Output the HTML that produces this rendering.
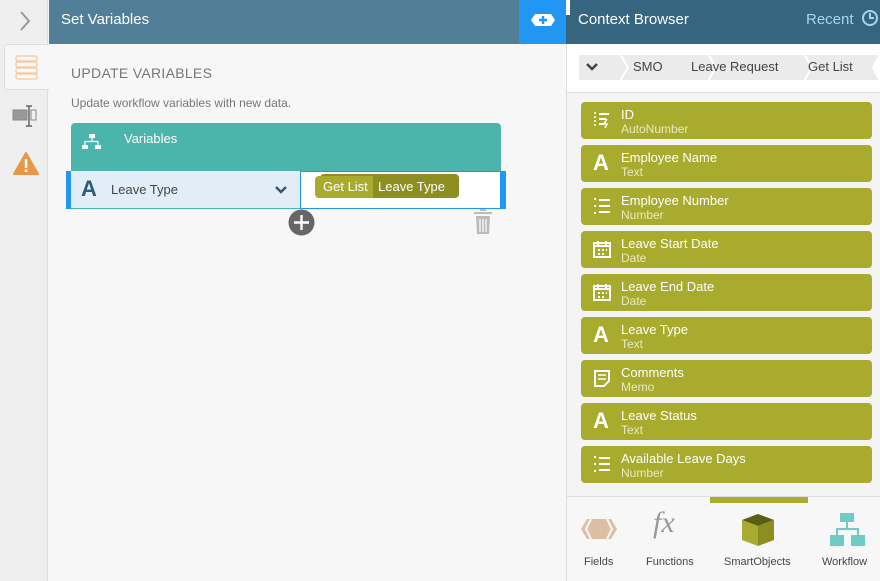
<!DOCTYPE html>
<html><head><meta charset="utf-8"><style>
*{margin:0;padding:0;box-sizing:border-box}
body{width:880px;height:581px;overflow:hidden;font-family:"Liberation Sans",sans-serif;background:#f7f7f7;position:relative}
.abs{position:absolute}
.item{position:absolute;left:581px;width:291px;height:37px;background:#a8ab2e;border-radius:4px;color:#fff}
.item .t{position:absolute;left:40px;top:5px;font-size:13px}
.item .s{position:absolute;left:40px;top:20px;font-size:12px;color:#e8ebbf}
.item .i{position:absolute;left:11px;top:8px;width:20px;height:20px}
.tab{position:absolute;top:556px;font-size:11px;color:#444}
</style></head><body>
<!-- left rail -->
<div class="abs" style="left:0;top:0;width:48px;height:581px;background:#efefef;border-right:1px solid #ddd"></div>
<svg class="abs" style="left:18px;top:10px" width="14" height="22"><path d="M3 2 L11 11 L3 20" stroke="#999" stroke-width="2" fill="none"/></svg>
<div class="abs" style="left:4px;top:44px;width:45px;height:46px;background:#f7f7f7;border:1px solid #ddd;border-right:none;border-radius:3px 0 0 3px"></div>
<svg class="abs" style="left:15px;top:54px" width="24" height="28"><g fill="none" stroke="#f3c9a0" stroke-width="1.3"><rect x="1" y="2" width="21" height="5" rx="1.5"/><rect x="1" y="8" width="21" height="5" rx="1.5"/><rect x="1" y="14" width="21" height="5" rx="1.5"/><rect x="1" y="20" width="21" height="5" rx="1.5"/></g></svg>
<svg class="abs" style="left:12px;top:104px" width="26" height="24"><rect x="1" y="6" width="14" height="10" fill="#999" stroke="#888"/><rect x="19" y="6" width="5" height="10" fill="none" stroke="#888"/><path d="M14 2h6M17 2v20M14 22h6" stroke="#666" stroke-width="1.5"/></svg>
<svg class="abs" style="left:13px;top:151px" width="26" height="25"><path d="M13 2 L25 23 L1 23 Z" fill="#e8964a" stroke="#e8964a" stroke-linejoin="round" stroke-width="2"/><rect x="11.8" y="8" width="2.5" height="9" fill="#fff"/><rect x="11.8" y="18.5" width="2.5" height="2.5" fill="#fff"/></svg>
<!-- main header -->
<div class="abs" style="left:49px;top:0;width:470px;height:44px;background:#527f98;color:#fff;font-size:15px;padding:11px 0 0 12px">Set Variables</div>
<div class="abs" style="left:519px;top:0;width:47px;height:44px;background:#2196f3"></div>
<svg class="abs" style="left:529px;top:11px" width="28" height="18"><path d="M6 3h16l4 6-4 6H6L2 9z" fill="#fff"/><path d="M14 5v8M10 9h8" stroke="#2196f3" stroke-width="2.4"/></svg>
<div class="abs" style="left:71px;top:65px;font-size:14px;color:#777;letter-spacing:.3px">UPDATE VARIABLES</div>
<div class="abs" style="left:71px;top:96px;font-size:12px;color:#777">Update workflow variables with new data.</div>
<div class="abs" style="left:71px;top:123px;width:430px;height:48px;background:#4cb5ab;border-radius:4px 4px 0 0"></div>
<svg class="abs" style="left:82px;top:133px" width="20" height="17"><g fill="#fff"><rect x="7" y="1" width="6" height="4"/><rect x="0" y="12" width="6" height="4"/><rect x="13" y="12" width="6" height="4"/></g><path d="M10 5v3M3 12V8.5h13V12" stroke="#fff" fill="none" stroke-width="1.2"/></svg>
<div class="abs" style="left:124px;top:131px;color:#fff;font-size:13px">Variables</div>
<div class="abs" style="left:66px;top:171px;width:5px;height:38px;background:#2196f3"></div>
<div class="abs" style="left:501px;top:171px;width:5px;height:38px;background:#2196f3"></div>
<div class="abs" style="left:71px;top:171px;width:230px;height:38px;background:#e2eef7;border-bottom:1px solid #4cb5ab"></div>
<div class="abs" style="left:81px;top:176px;font-size:22px;font-weight:bold;color:#2d5c78">A</div>
<div class="abs" style="left:111px;top:182px;font-size:13px;color:#444">Leave Type</div>
<svg class="abs" style="left:274px;top:185px" width="14" height="10"><path d="M2 2l5 5 5-5" stroke="#3e5568" stroke-width="2.4" fill="none"/></svg>
<div class="abs" style="left:300px;top:171px;width:201px;height:38px;background:#fff;border:1px solid #2196f3"></div>
<div class="abs" style="left:320px;top:174px;width:139px;height:24px;background:#8c8e20;border-radius:4px"></div>
<div class="abs" style="left:315px;top:176px;width:141px;height:22px;background:#a8ab2e;border-radius:4px;overflow:hidden;font-size:13px;color:#fff">
<span style="position:absolute;left:8px;top:3px">Get List</span>
<span style="position:absolute;left:58px;top:0;width:83px;height:22px;background:#8c8e20;padding:3px 0 0 5px">Leave Type</span></div>
<svg class="abs" style="left:288px;top:209px" width="27" height="27"><circle cx="13.5" cy="13.5" r="13" fill="#666"/><path d="M13.5 6v15M6 13.5h15" stroke="#fff" stroke-width="2.4"/></svg>
<svg class="abs" style="left:472px;top:208px" width="22" height="28"><path d="M2 5h18M8 2h6" stroke="#bbb" stroke-width="2"/><path d="M4 8h14l-1 18H5z" fill="#bbb"/><path d="M8 11v13M11 11v13M14 11v13" stroke="#fff" stroke-width="1.2"/></svg>
<!-- right panel -->
<div class="abs" style="left:566px;top:0;width:314px;height:581px;background:#f4f4f4;border-left:1px solid #ddd"></div>
<div class="abs" style="left:566px;top:0;width:314px;height:44px;background:#366580"></div>
<div class="abs" style="left:566px;top:0;width:4px;height:15px;background:#fff"></div>
<div class="abs" style="left:578px;top:11px;color:#fff;font-size:15px">Context Browser</div>
<div class="abs" style="left:806px;top:11px;color:#a8d4f0;font-size:15px">Recent</div>
<svg class="abs" style="left:861px;top:9px" width="18" height="18"><circle cx="9" cy="9" r="7" fill="none" stroke="#a8d4f0" stroke-width="2"/><path d="M9 4v5h4" stroke="#a8d4f0" stroke-width="2" fill="none"/></svg>
<div class="abs" style="left:567px;top:44px;width:313px;height:49px;background:#fff;border-bottom:1px solid #ddd"></div>
<svg class="abs" style="left:578px;top:54px" width="302" height="27"><g fill="#ebebeb" stroke="#fff" stroke-width="2"><path d="M220 0h82l-7 13.5 7 13.5h-82l8-13.5z"/><path d="M126 0h100l8 13.5-8 13.5H126l8-13.5z"/><path d="M38 0h92l8 13.5-8 13.5H38l8-13.5z"/><path d="M0 0h42l8 13.5-8 13.5H0z"/></g></svg>
<svg class="abs" style="left:585px;top:62px" width="14" height="10"><path d="M2 2l5 5 5-5" stroke="#444" stroke-width="2.4" fill="none"/></svg>
<div class="abs" style="left:633px;top:59px;font-size:13px;color:#444">SMO</div>
<div class="abs" style="left:691px;top:59px;font-size:13px;color:#444">Leave Request</div>
<div class="abs" style="left:808px;top:59px;font-size:13px;color:#444">Get List</div>

<div class="item" style="top:102px"><svg class="i" viewBox="0 0 20 20"><path d="M2 3h2M2 7h2M2 11h2M2 15h2" stroke="#fff" stroke-width="1.5"/><path d="M7 4h10M7 9h7M7 14h5" stroke="#fff" stroke-width="2"/><path d="M15 9l-3 5h3l-2 4" stroke="#fff" stroke-width="1.5" fill="none"/></svg><span class="t">ID</span><span class="s">AutoNumber</span></div>
<div class="item" style="top:145px"><span style="position:absolute;left:12px;top:5px;font-size:22px;font-weight:bold">A</span><span class="t">Employee Name</span><span class="s">Text</span></div>
<div class="item" style="top:188px"><svg class="i" viewBox="0 0 20 20"><path d="M2 3h2M2 10h2M2 17h2" stroke="#fff" stroke-width="2"/><path d="M7 4h11M7 10h11M7 16h11" stroke="#fff" stroke-width="2"/></svg><span class="t">Employee Number</span><span class="s">Number</span></div>
<div class="item" style="top:231px"><svg class="i" viewBox="0 0 20 20"><rect x="2" y="4" width="16" height="14" fill="none" stroke="#fff" stroke-width="2"/><path d="M2 7h16M6 2v4M14 2v4" stroke="#fff" stroke-width="2"/><path d="M6 11h2M10 11h2M14 11h1M6 15h2M10 15h2" stroke="#fff" stroke-width="2"/></svg><span class="t">Leave Start Date</span><span class="s">Date</span></div>
<div class="item" style="top:274px"><svg class="i" viewBox="0 0 20 20"><rect x="2" y="4" width="16" height="14" fill="none" stroke="#fff" stroke-width="2"/><path d="M2 7h16M6 2v4M14 2v4" stroke="#fff" stroke-width="2"/><path d="M6 11h2M10 11h2M14 11h1M6 15h2M10 15h2" stroke="#fff" stroke-width="2"/></svg><span class="t">Leave End Date</span><span class="s">Date</span></div>
<div class="item" style="top:317px"><span style="position:absolute;left:12px;top:5px;font-size:22px;font-weight:bold">A</span><span class="t">Leave Type</span><span class="s">Text</span></div>
<div class="item" style="top:360px"><svg class="i" viewBox="0 0 20 20"><path d="M3 3h14v10l-5 5H3z" fill="none" stroke="#fff" stroke-width="2"/><path d="M6 7h8M6 11h8" stroke="#fff" stroke-width="1.5"/></svg><span class="t">Comments</span><span class="s">Memo</span></div>
<div class="item" style="top:403px"><span style="position:absolute;left:12px;top:5px;font-size:22px;font-weight:bold">A</span><span class="t">Leave Status</span><span class="s">Text</span></div>
<div class="item" style="top:446px"><svg class="i" viewBox="0 0 20 20"><path d="M2 3h2M2 10h2M2 17h2" stroke="#fff" stroke-width="2"/><path d="M7 4h11M7 10h11M7 16h11" stroke="#fff" stroke-width="2"/></svg><span class="t">Available Leave Days</span><span class="s">Number</span></div>

<div class="abs" style="left:567px;top:496px;width:313px;height:85px;background:#f7f7f7;border-top:1px solid #ddd"></div>
<div class="abs" style="left:710px;top:497px;width:98px;height:6px;background:#a8ab2e"></div>
<svg class="abs" style="left:580px;top:515px" width="38" height="28"><path d="M7 4h24l6 10-6 10H7L1 14z" fill="#dcbfa3"/><path d="M11 4l-5 10 5 10M27 4l5 10-5 10" stroke="#f7f7f7" stroke-width="2" fill="none"/></svg>
<div class="abs" style="left:653px;top:506px;font-family:'Liberation Serif',serif;font-style:italic;font-size:30px;color:#999">fx</div>
<svg class="abs" style="left:740px;top:512px" width="36" height="36"><path d="M18 2L34 8 18 14 2 8z" fill="#5a5e14"/><path d="M2 8l16 6v20L2 28z" fill="#a8ab2e"/><path d="M34 8l-16 6v20l16-6z" fill="#8c8e20"/></svg>
<svg class="abs" style="left:830px;top:513px" width="36" height="34"><g fill="#6ecbc6"><rect x="10" y="0" width="14" height="9"/><rect x="0" y="22" width="14" height="11"/><rect x="21" y="22" width="14" height="11"/></g><path d="M17 9v6M7 22v-6h21v6" stroke="#6ecbc6" stroke-width="2" fill="none"/></svg>
<div class="tab" style="left:584px">Fields</div>
<div class="tab" style="left:646px">Functions</div>
<div class="tab" style="left:724px">SmartObjects</div>
<div class="tab" style="left:822px">Workflow</div>
</body></html>
